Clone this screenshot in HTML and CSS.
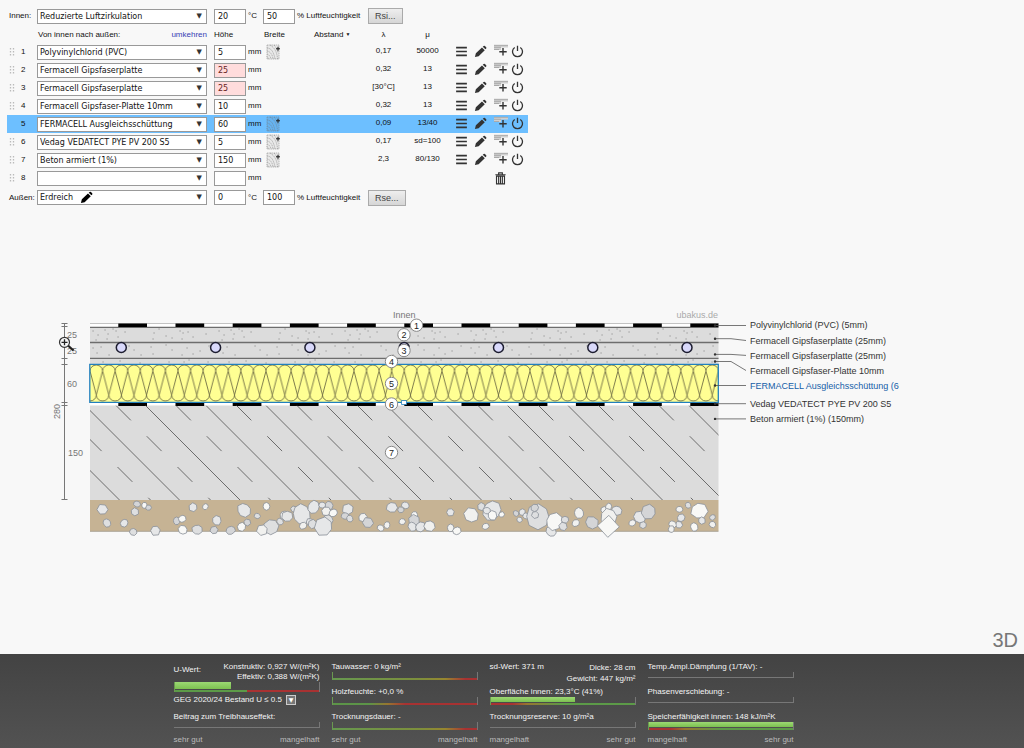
FILE: index.html
```html
<!DOCTYPE html>
<html lang="de">
<head>
<meta charset="utf-8">
<title>U-Wert-Rechner</title>
<link rel="stylesheet" href="styles.css">
</head>
<body>
<svg class="sprite" aria-hidden="true">
  <symbol id="i-menu" viewBox="0 0 14 14"><path d="M1.2 2.8h11.6M1.2 7h11.6M1.2 11.2h11.6" stroke="currentColor" stroke-width="1.7"/></symbol>
  <symbol id="i-pencil" viewBox="0 0 14 14"><path fill="currentColor" d="M1 13l1-4 6.6-6.4 3 3L5 12zM9.400 1.900l1-.9q.7-.6 1.400 0l1.300 1.300q.7.700 0 1.400l-.8.900z"/></symbol>
  <symbol id="i-add" viewBox="0 0 16 14"><path fill="#cfcfcf" d="M1 1h14v2.500H8V6H1z"/><path d="M1 1.300h14M1 3.300h7M1 5.500h5" stroke="#999" stroke-width=".7"/><path d="M10 4v7.500M6.300 7.700h7.400" stroke="currentColor" stroke-width="1.400"/></symbol>
  <symbol id="i-power" viewBox="0 0 14 14"><path d="M4 2.700a5.400 5.400 0 1 0 6 0M7 .8v5.700" fill="none" stroke="currentColor" stroke-width="1.400"/></symbol>
  <symbol id="i-trash" viewBox="0 0 14 14"><path d="M1.500 3h11M5 2.700V1h4v1.700M2.700 4.500h8.600v8.300H2.700zM5 5v7M7 5v7M9 5v7" fill="none" stroke="currentColor" stroke-width="1.200"/></symbol>
  <symbol id="i-wood" viewBox="0 0 16 16"><path fill="#000" fill-opacity=".06" d="M1 1h12v14H1z"/><path fill="none" stroke="#777" stroke-opacity=".8" stroke-width=".6" stroke-dasharray="1.500 .7" d="M1 1h12v14H1zM1 4q6 0 8 11M1 7q5 1 6 8M1 10q3 1 4 5M1 12.500q1 1 1.500 2.500M4 1q7 4 7.500 14M8 1q3 3 4 8"/><path d="M12 2.800v4M10 4.800h4" stroke="#222" stroke-width="1.100"/></symbol>
  <symbol id="i-grip" viewBox="0 0 6 10"><path d="M1.500 1v8M4.500 1v8" stroke="#bbb" stroke-width="1.300" stroke-dasharray="1.500 1.500"/></symbol>
</svg>

<main class="workspace">
  <form class="layers">
    <div class="climate">
      <label class="side" for="in-air">Innen:</label>
      <span class="pick"><select id="in-air"><option>Reduzierte Luftzirkulation</option></select></span>
      <input class="num" id="in-t" value="20" aria-label="Temperatur innen"><label class="unit" for="in-t">°C</label>
      <input class="num" id="in-h" value="50"><label class="humid" for="in-h">% Luftfeuchtigkeit</label>
      <button type="button" class="push">Rsi...</button>
    </div>
    <table>
      <colgroup><col class="c-no"><col class="c-mat"><col class="c-h"><col class="c-b"><col class="c-a"><col class="c-l"><col class="c-m"><col class="c-act"></colgroup>
      <thead>
        <tr><th></th><th class="mat-head"><span>Von innen nach außen:</span><a href="#">umkehren</a></th><th class="h">Höhe</th><th class="left">Breite</th><th class="left dist">Abstand <span class="tiny">▼</span></th><th>λ</th><th>μ</th><th></th></tr>
      </thead>
      <tbody>
        <tr><td class="no"><svg><use href="#i-grip"/></svg>1</td><td><span class="pick"><select aria-label="Material 1"><option>Polyvinylchlorid (PVC)</option></select></span></td><td class="h"><input class="num" id="h1" value="5"><label class="unit" for="h1">mm</label></td><td><button type="button" class="icon wood" aria-label="Gefach"><svg><use href="#i-wood"/></svg></button></td><td></td><td class="val">0,17</td><td class="val">50000</td><td class="acts"><button type="button" class="icon" aria-label="Menü"><svg><use href="#i-menu"/></svg></button><button type="button" class="icon" aria-label="Bearbeiten"><svg><use href="#i-pencil"/></svg></button><button type="button" class="icon add" aria-label="Einfügen"><svg><use href="#i-add"/></svg></button><button type="button" class="icon" aria-label="Aus"><svg><use href="#i-power"/></svg></button></td></tr>
        <tr><td class="no"><svg><use href="#i-grip"/></svg>2</td><td><span class="pick"><select aria-label="Material 2"><option>Fermacell Gipsfaserplatte</option></select></span></td><td class="h"><input class="num warn" id="h2" value="25"><label class="unit" for="h2">mm</label></td><td></td><td></td><td class="val">0,32</td><td class="val">13</td><td class="acts"><button type="button" class="icon" aria-label="Menü"><svg><use href="#i-menu"/></svg></button><button type="button" class="icon" aria-label="Bearbeiten"><svg><use href="#i-pencil"/></svg></button><button type="button" class="icon add" aria-label="Einfügen"><svg><use href="#i-add"/></svg></button><button type="button" class="icon" aria-label="Aus"><svg><use href="#i-power"/></svg></button></td></tr>
        <tr><td class="no"><svg><use href="#i-grip"/></svg>3</td><td><span class="pick"><select aria-label="Material 3"><option>Fermacell Gipsfaserplatte</option></select></span></td><td class="h"><input class="num warn" id="h3" value="25"><label class="unit" for="h3">mm</label></td><td></td><td></td><td class="val">[30°C]</td><td class="val">13</td><td class="acts"><button type="button" class="icon" aria-label="Menü"><svg><use href="#i-menu"/></svg></button><button type="button" class="icon" aria-label="Bearbeiten"><svg><use href="#i-pencil"/></svg></button><button type="button" class="icon add" aria-label="Einfügen"><svg><use href="#i-add"/></svg></button><button type="button" class="icon" aria-label="Aus"><svg><use href="#i-power"/></svg></button></td></tr>
        <tr><td class="no"><svg><use href="#i-grip"/></svg>4</td><td><span class="pick"><select aria-label="Material 4"><option>Fermacell Gipsfaser-Platte 10mm</option></select></span></td><td class="h"><input class="num" id="h4" value="10"><label class="unit" for="h4">mm</label></td><td></td><td></td><td class="val">0,32</td><td class="val">13</td><td class="acts"><button type="button" class="icon" aria-label="Menü"><svg><use href="#i-menu"/></svg></button><button type="button" class="icon" aria-label="Bearbeiten"><svg><use href="#i-pencil"/></svg></button><button type="button" class="icon add" aria-label="Einfügen"><svg><use href="#i-add"/></svg></button><button type="button" class="icon" aria-label="Aus"><svg><use href="#i-power"/></svg></button></td></tr>
        <tr class="active"><td class="no"><svg></svg>5</td><td><span class="pick"><select aria-label="Material 5"><option>FERMACELL Ausgleichsschüttung</option></select></span></td><td class="h"><input class="num" id="h5" value="60"><label class="unit" for="h5">mm</label></td><td><button type="button" class="icon wood" aria-label="Gefach"><svg><use href="#i-wood"/></svg></button></td><td></td><td class="val">0,09</td><td class="val">13/40</td><td class="acts"><button type="button" class="icon" aria-label="Menü"><svg><use href="#i-menu"/></svg></button><button type="button" class="icon" aria-label="Bearbeiten"><svg><use href="#i-pencil"/></svg></button><button type="button" class="icon add" aria-label="Einfügen"><svg><use href="#i-add"/></svg></button><button type="button" class="icon" aria-label="Aus"><svg><use href="#i-power"/></svg></button></td></tr>
        <tr><td class="no"><svg><use href="#i-grip"/></svg>6</td><td><span class="pick"><select aria-label="Material 6"><option>Vedag VEDATECT PYE PV 200 S5</option></select></span></td><td class="h"><input class="num" id="h6" value="5"><label class="unit" for="h6">mm</label></td><td><button type="button" class="icon wood" aria-label="Gefach"><svg><use href="#i-wood"/></svg></button></td><td></td><td class="val">0,17</td><td class="val">sd=100</td><td class="acts"><button type="button" class="icon" aria-label="Menü"><svg><use href="#i-menu"/></svg></button><button type="button" class="icon" aria-label="Bearbeiten"><svg><use href="#i-pencil"/></svg></button><button type="button" class="icon add" aria-label="Einfügen"><svg><use href="#i-add"/></svg></button><button type="button" class="icon" aria-label="Aus"><svg><use href="#i-power"/></svg></button></td></tr>
        <tr><td class="no"><svg><use href="#i-grip"/></svg>7</td><td><span class="pick"><select aria-label="Material 7"><option>Beton armiert (1%)</option></select></span></td><td class="h"><input class="num" id="h7" value="150"><label class="unit" for="h7">mm</label></td><td><button type="button" class="icon wood" aria-label="Gefach"><svg><use href="#i-wood"/></svg></button></td><td></td><td class="val">2,3</td><td class="val">80/130</td><td class="acts"><button type="button" class="icon" aria-label="Menü"><svg><use href="#i-menu"/></svg></button><button type="button" class="icon" aria-label="Bearbeiten"><svg><use href="#i-pencil"/></svg></button><button type="button" class="icon add" aria-label="Einfügen"><svg><use href="#i-add"/></svg></button><button type="button" class="icon" aria-label="Aus"><svg><use href="#i-power"/></svg></button></td></tr>
        <tr><td class="no"><svg><use href="#i-grip"/></svg>8</td><td><span class="pick"><select aria-label="Material 8"><option></option></select></span></td><td class="h"><input class="num" id="h8" value=""><label class="unit" for="h8">mm</label></td><td></td><td></td><td></td><td></td><td class="acts trash"><button type="button" class="icon" aria-label="Alle löschen"><svg><use href="#i-trash"/></svg></button></td></tr>
      </tbody>
    </table>
    <div class="climate outer">
      <label class="side" for="out-air">Außen:</label>
      <span class="pick"><select id="out-air"><option>Erdreich</option></select><button type="button" class="icon edit" aria-label="Erdreich bearbeiten"><svg><use href="#i-pencil"/></svg></button></span>
      <input class="num" id="out-t" value="0" aria-label="Temperatur außen"><label class="unit" for="out-t">°C</label>
      <input class="num" id="out-h" value="100"><label class="humid" for="out-h">% Luftfeuchtigkeit</label>
      <button type="button" class="push">Rse...</button>
    </div>
  </form>

  <svg class="section" viewBox="50 305 849 235" role="img" aria-label="Querschnitt">
    <defs>
      <pattern id="speck" x="90" y="327" width="126" height="38" patternUnits="userSpaceOnUse">
        <path d="M3 4h.1M8 8h.1M6 13h.1M15 3h.1M18 7h.1M26 4h.1M28 10h.1M35 5h.1M17 12h.1M23 2h.1M64 6h.1M63 12h.1M76 9h.1M82 11h.1M90 4h.1M93 6h.1M98 5h.1M103 10h.1M92 12h.1M69 2h.1M116 7h.1M3 21h.1M11 20h.1M7 26h.1M19 28h.1M39 19h.1M44 23h.1M51 28h.1M61 20h.1M63 27h.1M76 18h.1M82 23h.1M97 21h.1M103 27h.1M92 28h.1M110 24h.1M119 19h.1M13 35h.1M30 34h.1M50 36h.1M79 35h.1M94 35h.1M99 33h.1M118 35h.1" stroke="#a6a6a6" stroke-width="1.500" stroke-linecap="round"/>
      </pattern>
      <pattern id="wool" x="90" y="364" width="12.57" height="38" patternUnits="userSpaceOnUse">
        <path d="M0 7a6.280 6 0 0 1 12.570 0L6.280 31L0 7M-6.280 31a6.280 6 0 0 0 12.560 0a6.280 6 0 0 0 12.560 0" fill="none" stroke="#6f6c44" stroke-width=".9"/>
      </pattern>
      <clipPath id="slab"><path d="M90 405.500h628.500V500H90z"/></clipPath>
    </defs>

    <path fill="#fff" d="M90 323.500h628.500v4H90zM90 402h628.500v4H90z"/>
    <path fill="#dcdcdc" d="M90 327h628.500v37H90zM90 405.500h628.500V500H90z"/>
    <path fill="url(#speck)" d="M90 327h628.500v37H90z"/>
    <path d="M90 323.500h628.500" stroke="#aaa" stroke-width=".7"/>
    <path d="M90 327.300h628.500M90 342.500h628.500M90 358.400h628.500" stroke="#6d6d6d" stroke-width="1.300"/>
    <path d="M118.300 325.200h600.200M118.300 404.200h600.200" stroke="#000" stroke-width="3.400" stroke-dasharray="28.700 28.500"/>
    <path fill="#ffff93" d="M90 364h628.500v38.500H90z"/>
    <path fill="url(#wool)" d="M90 364h628.500v38H90z"/>
    <path fill="none" stroke="#2180bd" stroke-width="1.300" d="M89.800 364.300h628.500v38H89.800z"/>

    <g clip-path="url(#slab)" stroke="#6c6c6c" fill="none">
      <path d="M25 405.500l95 95M85 405.500l95 95M145.500 405.500l95 95M206 405.500l95 95M266 405.500l95 95M326.500 405.500l95 95M387 405.500l95 95M447 405.500l95 95M507.500 405.500l95 95M568 405.500l95 95M628.500 405.500l95 95M689 405.500l95 95"/>
      <path stroke-dasharray="21 22.500" d="M56 405.500l95 95M116 405.500l95 95M176 405.500l95 95M236.500 405.500l95 95M297 405.500l95 95M357.500 405.500l95 95M417.500 405.500l95 95M478 405.500l95 95M538.500 405.500l95 95M598.500 405.500l95 95M659 405.500l95 95"/>
    </g>

    <g fill="#d9d9fb" stroke="#1d1d30" stroke-width="1.500">
      <circle cx="121.300" cy="347.500" r="5"/><circle cx="215.600" cy="347.500" r="5"/><circle cx="309.900" cy="347.500" r="5"/><circle cx="404.200" cy="347.500" r="5"/><circle cx="498.500" cy="347.500" r="5"/><circle cx="592.800" cy="347.500" r="5"/><circle cx="687" cy="347.500" r="5"/>
    </g>

    <path fill="#c6b394" d="M90 500h628.500v31H90z"/>
    <path stroke="#a9a293" d="M90 531.300h628.500"/>
    <g id="stones" stroke="#8d939b" stroke-width="2.500" stroke-linejoin="round"></g>

    <g fill="none" stroke="#777">
      <path d="M64.500 323.500v176M61.500 323.500h6M61.500 326.500h6M61.500 358.500h6M61.500 364.500h6M61.500 402.500h6M61.500 405.500h6M61.500 499.500h6"/>
    </g>
    <g class="dim-text">
      <text x="67" y="338">25</text><text x="67" y="354">25</text><text x="67" y="387">60</text><text x="68" y="456">150</text>
      <text transform="translate(60 419) rotate(-90)">280</text>
      <text x="393" y="318">Innen</text>
      <text class="brand" x="718" y="318" text-anchor="end">ubakus.de</text>
    </g>
    <path d="M68 345.500l5.500 5" stroke="#222" stroke-width="2.200"/>
    <circle cx="64.500" cy="342.300" r="5" fill="#f8f8f8" stroke="#333" stroke-width="1.200"/>
    <path d="M61.500 342.300h6M64.500 339.300v6" stroke="#222" stroke-width="1.300"/>

    <path d="M401.500 400.500h5v4h-5z" fill="#fff" stroke="#2180bd" stroke-width=".8"/>
    <g class="badges">
      <circle cx="416.500" cy="325.200" r="6.200"/><circle cx="404" cy="334.800" r="6.200"/><circle cx="404" cy="350.500" r="6.200"/><circle cx="391.500" cy="361.500" r="6.200"/><circle cx="391.500" cy="383.500" r="6.200"/><circle cx="391.500" cy="404" r="6.200"/><circle cx="391.500" cy="452.500" r="6.200"/>
      <text x="416.500" y="328.500">1</text><text x="404" y="338">2</text><text x="404" y="354">3</text><text x="391.500" y="365">4</text><text x="391.500" y="387">5</text><text x="391.500" y="407.500">6</text><text x="391.500" y="456">7</text>
    </g>

    <path fill="none" stroke="#555" stroke-width=".8" d="M715 325.500h31M715 338.700h16l15 1.800M715 354.400h16l15 1M715 361.500h16l15 9M715 385.500h31M715 403.700h31M715 418.900h31"/>
    <path stroke="#333" stroke-width="2.400" stroke-linecap="round" d="M715 325.500h.1M715 338.700h.1M715 354.400h.1M715 361.500h.1M715 385.500h.1M715 403.700h.1M715 418.900h.1"/>
    <g class="callouts">
      <text x="750" y="328">Polyvinylchlorid (PVC) (5mm)</text>
      <text x="750" y="344">Fermacell Gipsfaserplatte (25mm)</text>
      <text x="750" y="359">Fermacell Gipsfaserplatte (25mm)</text>
      <text x="750" y="374">Fermacell Gipsfaser-Platte 10mm</text>
      <text x="750" y="389" class="sel">FERMACELL Ausgleichsschüttung (60mm)</text>
      <text x="750" y="407">Vedag VEDATECT PYE PV 200 S5</text>
      <text x="750" y="422">Beton armiert (1%) (150mm)</text>
    </g>
  </svg>

  <button type="button" class="view3d">3D</button>
</main>

<footer class="results">
  <section class="col lead">
    <div class="metric">
      <div class="pair"><span>U-Wert:</span><span class="right">Konstruktiv: 0,927 W/(m²K)<br>Effektiv: 0,388 W/(m²K)</span></div>
      <div class="track gauge u"><i class="fill f38"></i></div>
      <div class="norm"><label for="norm">GEG 2020/24 Bestand U ≤ 0.5</label><button type="button" id="norm">▼</button></div>
    </div>
    <div class="metric">Beitrag zum Treibhauseffekt:<div class="track empty"></div></div>
    <div class="pair scale"><span>sehr gut</span><span>mangelhaft</span></div>
  </section>
  <section class="col">
    <div class="metric">Tauwasser: 0 kg/m²<div class="track gauge late"></div></div>
    <div class="metric">Holzfeuchte: +0,0 %<div class="track gauge early"></div></div>
    <div class="metric">Trocknungsdauer: -<div class="track gauge late"></div></div>
    <div class="pair scale"><span>sehr gut</span><span>mangelhaft</span></div>
  </section>
  <section class="col">
    <div class="metric"><div class="pair"><span>sd-Wert: 371 m</span><span class="right">Dicke: 28 cm<br>Gewicht: 447 kg/m²</span></div></div>
    <div class="metric">Oberfläche innen: 23,3°C (41%)<div class="track gauge rise"><i class="fill f59"></i></div></div>
    <div class="metric">Trocknungsreserve: 10 g/m²a<div class="track empty"></div></div>
    <div class="pair scale"><span>mangelhaft</span><span>sehr gut</span></div>
  </section>
  <section class="col">
    <div class="metric">Temp.Ampl.Dämpfung (1/TAV): -<div class="track empty"></div></div>
    <div class="metric">Phasenverschiebung: -<div class="track empty"></div></div>
    <div class="metric">Speicherfähigkeit innen: 148 kJ/m²K<div class="track gauge rise"><i class="fill f100"></i></div></div>
    <div class="pair scale"><span>mangelhaft</span><span>sehr gut</span></div>
  </section>
</footer>
<script src="stones.js"></script>
</body>
</html>
```

FILE: styles.css
```css
* { box-sizing: border-box; }

body {
  margin: 0;
  min-height: 100vh;
  display: flex;
  flex-direction: column;
  background: #f8f8f8;
  color: #111;
  font: 8px/10px "Liberation Sans", Arial, sans-serif;
}

.sprite { display: none; }

.workspace {
  flex: 1;
  display: flex;
  flex-direction: column;
  align-items: flex-start;
}

/* Layer editor */
.layers { padding: 7px 0 0 7px; }

.climate {
  display: flex;
  align-items: center;
  height: 18px;
}
.climate.outer { height: 21px; }
.side { width: 30px; padding-left: 2px; }
.climate .pick { width: 170px; margin-right: 7px; }
.climate .unit { width: 17px; }
.humid { width: 73px; padding-left: 2px; }

table {
  width: 521px;
  table-layout: fixed;
  border-collapse: collapse;
}
.c-no { width: 30px; }
.c-mat { width: 170px; }
.c-h { width: 56px; }
.c-b { width: 43px; }
.c-a { width: 55px; }
.c-l { width: 45px; }
.c-m { width: 43px; }
.c-act { width: 79px; }

tr { height: 18px; }
th, td { padding: 0; font-weight: normal; text-align: center; vertical-align: middle; }
th { padding-top: 1px; }
th.left { text-align: left; padding-left: 1px; }
th.dist { padding-left: 8px; white-space: nowrap; }
th.h { text-align: left; padding-left: 7px; }
td.h { text-align: left; padding-left: 7px; white-space: nowrap; }
.mat-head { text-align: left; }
.mat-head a { float: right; color: #3540b4; text-decoration: none; }
.mat-head span { float: left; padding-left: 1px; }
.tiny { font-size: 5px; line-height: 1px; vertical-align: 1px; }
.active { background: #6dbfff; }

td.no { text-align: left; }
td.no svg { width: 6px; height: 10px; margin: 0 6px 0 2px; vertical-align: middle; }
td.val { padding-bottom: 3px; }

.pick { position: relative; display: block; }
.pick::after {
  content: "▼";
  position: absolute;
  right: 5px;
  top: 2px;
  color: #333;
  font: 7px/10px "DejaVu Sans", sans-serif;
  pointer-events: none;
}
select, input {
  height: 15px;
  border: 1px solid #999;
  border-radius: 0;
  background: #fff;
  color: #111;
  font: 8px/13px "DejaVu Sans", Verdana, sans-serif;
  appearance: none;
  margin: 0;
}
select { display: block; width: 100%; padding: 0 2px; }
.num { width: 32px; padding: 0 3px; vertical-align: middle; }
.warn { background: #ffdcdc; color: #622; }
.unit { padding-left: 2px; }
td .unit { vertical-align: middle; }

.push {
  height: 16px;
  padding: 0 6px;
  border: 1px solid #aaa;
  background: linear-gradient(#eee, #d6d6d6);
  color: #444;
  font: 9px/12px "Liberation Sans", Arial, sans-serif;
}

.icon {
  display: block;
  padding: 0;
  border: 0;
  background: none;
  color: #333;
}
.icon svg { display: block; width: 13px; height: 13px; }
.icon.add svg { width: 16px; height: 14px; }
.icon.wood { margin-left: 3px; }
.icon.wood svg { width: 16px; height: 16px; }
.acts .icon { display: inline-block; margin-right: 6px; vertical-align: middle; }
.acts .icon.add { margin-right: 2px; }
.acts .icon:last-child { margin-right: 0; }
td.acts { padding: 0 4px 2px 6px; font-size: 0; white-space: nowrap; }
td.acts.trash { padding-left: 28px; padding-bottom: 0; }
.edit { position: absolute; left: 43px; top: 1px; color: #000; }

/* Cross section */
.section {
  width: 849px;
  max-width: 100%;
  height: auto;
  margin: 97px 0 0 50px;
  font: 9px "Liberation Sans", Arial, sans-serif;
}
.dim-text { fill: #777; }
.dim-text .brand { fill: #aaa; }
.badges circle { fill: #fff; stroke: #888; }
.badges text { fill: #222; text-anchor: middle; }
.callouts { fill: #333; }
.callouts .sel { fill: #1560a8; }

.view3d {
  align-self: flex-end;
  margin: auto 6px 4px 0;
  padding: 0;
  border: 0;
  background: none;
  color: #777;
  font: 20px/20px "Liberation Sans", Arial, sans-serif;
}

/* Results */
.results {
  display: flex;
  justify-content: center;
  gap: 12px;
  padding: 8px 57px 3px 0;
  background: linear-gradient(#434343, #525252);
  color: #f4f4f4;
}
.col {
  width: 146px;
  display: grid;
  grid-template-rows: 25px 25px 23px 10px;
}
.col.lead { grid-template-rows: 50px 23px 10px; }
.metric { white-space: nowrap; }
.pair { display: flex; justify-content: space-between; }
.pair .right { text-align: right; line-height: 11px; }
.lead .metric .pair { height: 20px; }
.lead .metric .pair span:first-child { padding-top: 3px; }
.lead .pair .right { line-height: 10px; }
.scale { color: #bbb; }

.track { height: 8px; border-right: 1px solid #777; }
.empty { height: 6px; border-bottom: 1px solid #777; }
.gauge {
  border-left: 1px solid #6a9a50;
  background-repeat: no-repeat;
  background-position: 0 100%;
  background-size: 100% 2px;
}
.fill { display: block; height: 5px; background: linear-gradient(#9cd873, #7cc050); }
.f38 { width: 39%; }
.f59 { width: 59%; }
.f100 { width: 100%; }
.u { height: 10px; background-image: linear-gradient(90deg, #5c9a48 50%, #a83232 50%); }
.u .fill { height: 7px; }
.late { background-image: linear-gradient(90deg, #66984f, #7d8f3c 60%, #97862f 78%, #a83232 92%); }
.early { background-image: linear-gradient(90deg, #5c9448 25%, #97762f 38%, #a83232 50%); }
.rise { background-image: linear-gradient(90deg, #a83232 15%, #97762f 25%, #5c9a48 50%); }

.norm { display: flex; align-items: center; gap: 4px; margin-top: 3px; }
.norm button {
  width: 10px;
  height: 10px;
  padding: 0;
  border: 1px solid #ccc;
  background: #777;
  color: #fff;
  font: 6px/8px "DejaVu Sans", sans-serif;
}
```

FILE: stones.js
```js
// Gravel bed: x, y, radius triples, in thirds of a drawing unit.
const beds = [
  [80, [68,59,15,171,42,9,193,46,8,205,53,8,164,66,11,81,99,11,133,99,11,160,125,10,226,121,14,290,93,10,307,87,10,309,120,13,340,52,12,376,50,8,351,119,14,410,92,13,402,121,11,452,121,12,492,60,19,484,110,12,501,97,10,532,78,8,560,49,10,575,110,22,547,119,15,600,95,9,612,77,12,622,80,15,642,58,9,665,72,26,669,107,10,690,97,11,697,103,13,701,51,17,727,45,9,747,46,12,738,63,13,760,69,11,745,90,14,732,110,25,805,57,16,795,78,10,809,86,9,848,83,12,864,99,15,902,114,9,921,105,9,935,52,15]],
  [400, [3,60,9,16,46,10,43,76,10,6,95,9,41,92,16,37,110,12,62,110,14,89,107,15,151,66,11,152,114,10,171,123,11,215,76,21,245,50,11,275,62,26,260,62,10,277,77,13,305,74,8,257,109,9,348,70,8,366,66,9,358,89,8,379,78,9,415,80,33,405,53,11,406,74,10,453,124,14,463,96,24,495,90,10,490,110,12,537,69,14,527,99,10,575,98,18,611,60,9,626,50,9,650,62,14,626,80,24,625,109,33,697,99,9,720,82,17,747,66,20,730,105,10,838,58,9,864,46,8,843,84,11,837,105,10,818,103,10,814,117,9,897,62,23,905,92,10,883,111,11,938,82,8,938,103,9]]
];
const tones = ["#dedfe0", "#f1f1ef", "#e6e7e8", "#d4d5d7", "#f8f8f6"];
const ns = "http://www.w3.org/2000/svg";
const root = document.getElementById("stones");

beds.forEach(([left, data]) => {
  const bed = document.createElementNS(ns, "g");
  bed.setAttribute("transform", `translate(${left} 490) scale(.3333)`);
  for (let i = 0; i < data.length; i += 3) {
    const [x, y, r] = data.slice(i, i + 3);
    const big = r > 30 && y > 100;
    const sides = big ? 4 : 6 + (i % 4);
    const points = [];
    for (let k = 0; k < sides; k++) {
      const a = (k / sides) * 2 * Math.PI + (big ? 0.05 : i);
      const d = big ? r : r * (1.08 + 0.12 * Math.sin(i * 7 + k * 5));
      points.push(`${(x + d * Math.cos(a)).toFixed(1)},${(y + d * Math.sin(a)).toFixed(1)}`);
    }
    const stone = document.createElementNS(ns, "polygon");
    stone.setAttribute("points", points.join(" "));
    stone.setAttribute("fill", big ? tones[4] : tones[(x + y) % 5]);
    bed.append(stone);
  }
  root.append(bed);
});
```
